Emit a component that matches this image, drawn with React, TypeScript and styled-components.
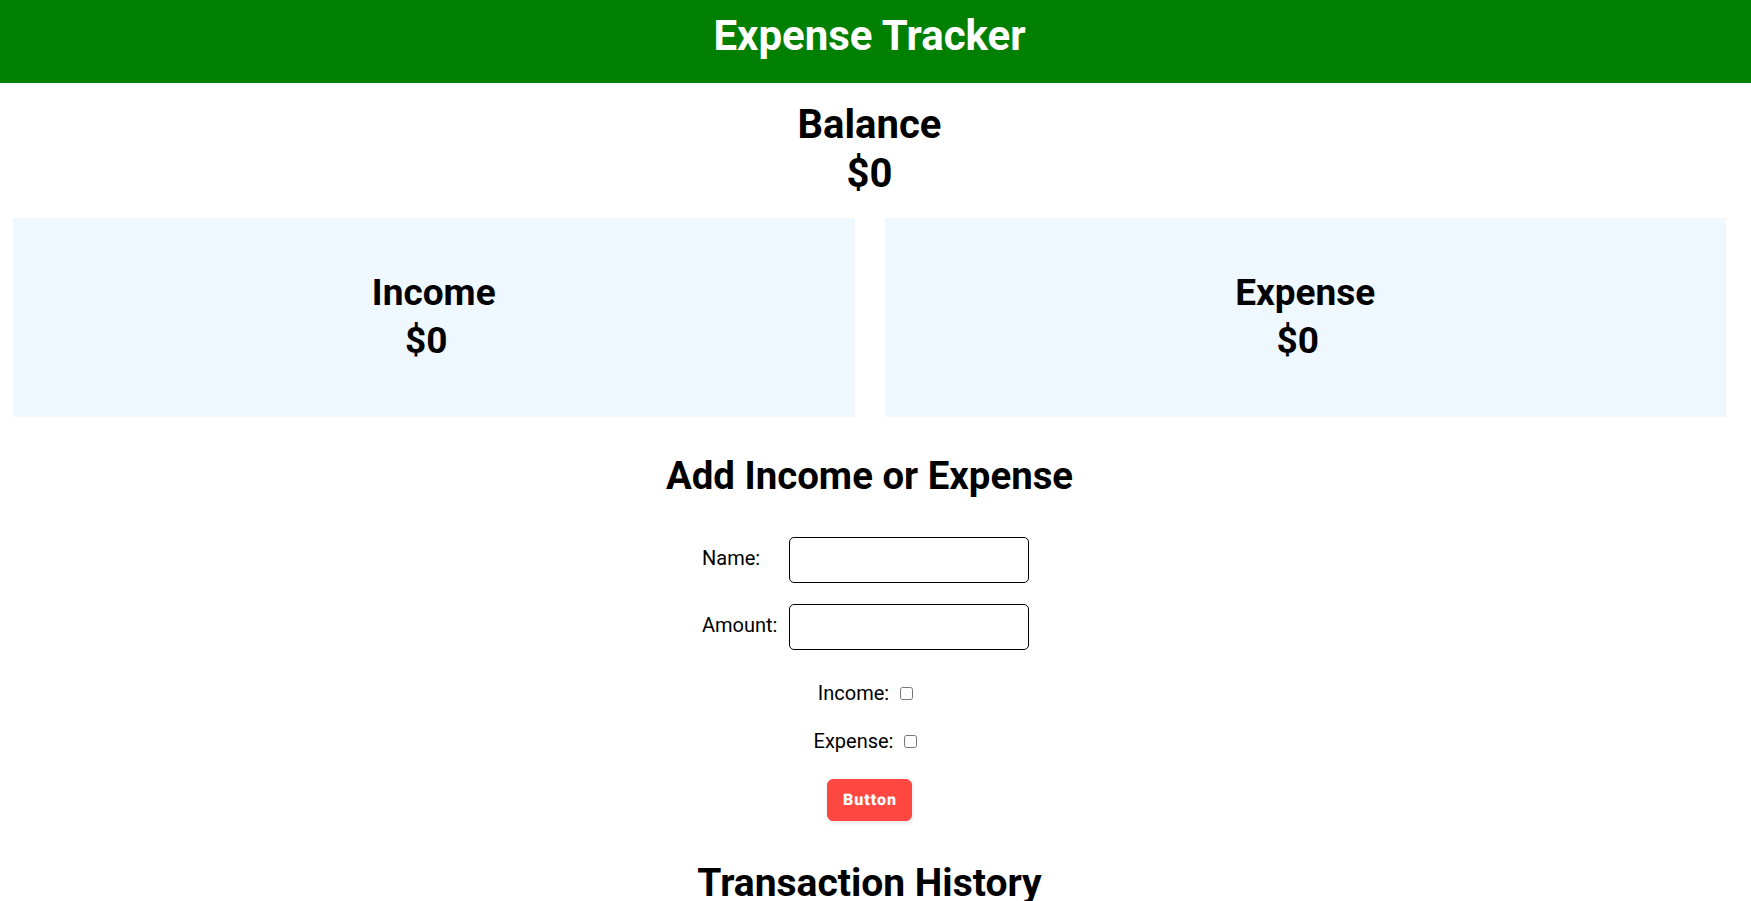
import React from "react";
import styled, { createGlobalStyle } from "styled-components";

const GlobalStyle = createGlobalStyle`
  html, body {
    margin: 0;
    padding: 0;
    background: #ffffff;
  }
  body {
    font-family: Roboto, "Liberation Sans", Arial, sans-serif;
    color: #000000;
  }
  * {
    box-sizing: border-box;
  }
`;

const Header = styled.header`
  background: #008000;
  height: 83px;
  padding: 11px 12px 0 0;
`;

const Title = styled.h1`
  margin: 0;
  font-size: 42px;
  line-height: 49px;
  font-weight: 700;
  color: #ffffff;
  text-align: center;
`;

const Main = styled.main`
  padding: 17px 25px 0 13px;
`;

const Heading = styled.h2<{ $shift?: number; $size?: number; $lh?: number }>`
  margin: 0;
  font-size: ${(p) => p.$size ?? 40}px;
  line-height: ${(p) => p.$lh ?? 49}px;
  font-weight: 700;
  text-align: center;
  padding-right: ${(p) => (p.$shift ? `${p.$shift}px` : "0")};
`;

const BalanceBlock = styled.section`
  display: flex;
  flex-direction: column;
`;

const Cards = styled.div`
  display: grid;
  grid-template-columns: 1fr 1fr;
  column-gap: 30px;
  margin-top: 20px;
`;

const Card = styled.div`
  background: #f0f8ff;
  height: 199px;
  padding: 51px 0 0;
  display: flex;
  flex-direction: column;
`;

const SectionTitle = styled.h2<{ $top: number; $size: number }>`
  margin: ${(p) => p.$top}px 0 0;
  font-size: ${(p) => p.$size}px;
  line-height: 45px;
  font-weight: 700;
  text-align: center;
`;

const FormGrid = styled.form`
  display: grid;
  grid-template-columns: 87px 240px;
  row-gap: 21px;
  justify-content: center;
  align-items: center;
  margin-top: 39px;
  padding-right: 8px;
`;

const FieldLabel = styled.label`
  font-size: 20px;
  line-height: 24px;
  text-align: left;
  margin-bottom: 4px;
`;

const TextInput = styled.input`
  width: 240px;
  height: 46px;
  border: 1px solid #000000;
  border-radius: 5px;
  padding: 0 10px;
  font-family: inherit;
  font-size: 16px;
  background: #ffffff;
  outline: none;
`;

const Checks = styled.div`
  display: flex;
  flex-direction: column;
  align-items: center;
  gap: 25px;
  margin-top: 32px;
  padding-right: 5px;
`;

const CheckRow = styled.label`
  display: flex;
  align-items: center;
  height: 23px;
  font-size: 20px;
  line-height: 23px;
`;

const CheckText = styled.span`
  margin-right: 7px;
`;

const CheckBox = styled.input`
  width: 13px;
  height: 13px;
  margin: 3px 3px 3px 4px;
`;

const ButtonRow = styled.div`
  display: flex;
  justify-content: center;
  margin-top: 26px;
`;

const ActionButton = styled.button`
  background: #ff4742;
  border: 1px solid #ff4742;
  border-radius: 6px;
  box-shadow: rgba(0, 0, 0, 0.1) 1px 2px 4px;
  color: #ffffff;
  cursor: pointer;
  font-family: Roboto, "Liberation Sans", sans-serif;
  font-size: 16px;
  font-weight: 900;
  letter-spacing: 1px;
  line-height: 16px;
  min-height: 40px;
  padding: 12px 14px 12px 15px;
  text-align: center;
  text-rendering: geometricPrecision;
`;

export default function App() {
  return (
    <>
      <GlobalStyle />
      <Header>
        <Title>Expense Tracker</Title>
      </Header>
      <Main>
        <BalanceBlock>
          <Heading>Balance</Heading>
          <Heading>$0</Heading>
        </BalanceBlock>
        <Cards>
          <Card>
            <Heading $size={37} $lh={48}>Income</Heading>
            <Heading $size={37} $lh={48} $shift={15}>$0</Heading>
          </Card>
          <Card>
            <Heading $size={37} $lh={48}>Expense</Heading>
            <Heading $size={37} $lh={48} $shift={15}>$0</Heading>
          </Card>
        </Cards>
        <SectionTitle $top={36} $size={38.4}>Add Income or Expense</SectionTitle>
        <FormGrid onSubmit={(e) => e.preventDefault()}>
          <FieldLabel htmlFor="name">Name:</FieldLabel>
          <TextInput id="name" type="text" />
          <FieldLabel htmlFor="amount">Amount:</FieldLabel>
          <TextInput id="amount" type="number" />
        </FormGrid>
        <Checks>
          <CheckRow>
            <CheckText>Income:</CheckText>
            <CheckBox type="checkbox" />
          </CheckRow>
          <CheckRow>
            <CheckText>Expense:</CheckText>
            <CheckBox type="checkbox" />
          </CheckRow>
        </Checks>
        <ButtonRow>
          <ActionButton type="button">Button</ActionButton>
        </ButtonRow>
        <SectionTitle $top={40} $size={39}>Transaction History</SectionTitle>
      </Main>
    </>
  );
}
